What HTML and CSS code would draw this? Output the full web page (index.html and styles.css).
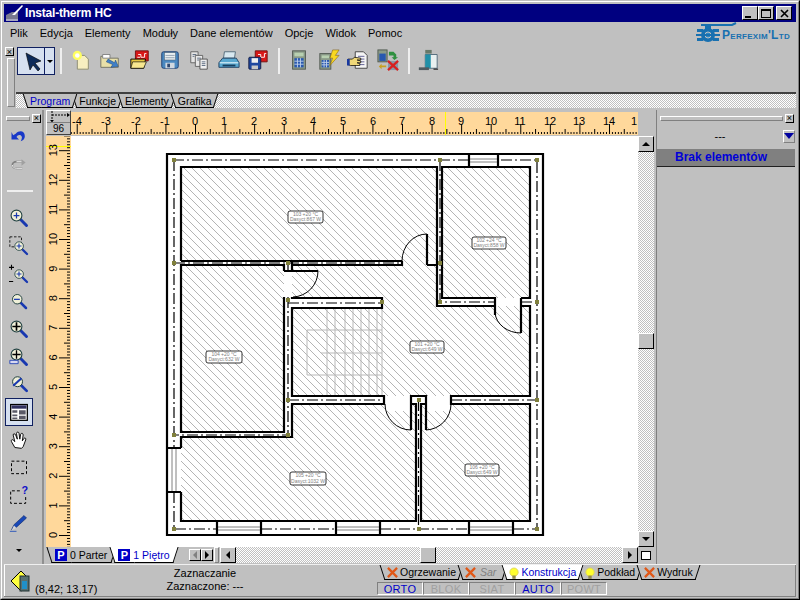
FILE: index.html
```html
<!DOCTYPE html>
<html lang="pl">
<head>
    <meta charset="UTF-8">
    <title>Instal-therm HC</title>
    <link rel="stylesheet" href="styles.css">
</head>
<body>
<svg class="defs" width="0" height="0">
    <defs>
        <pattern id="hatch" patternUnits="userSpaceOnUse" width="8" height="8">
            <path d="M-1,-1L9,9M-1,7L1,9M7,-1L9,1" stroke="#b4b4b4" stroke-width="1" fill="none"/>
        </pattern>
        <pattern id="tickx" patternUnits="userSpaceOnUse" width="29.57" height="23" x="195">
            <path d="M.5,12V22M3.5,20V22M6.4,20V22M9.4,20V22M12.3,20V22M15.3,17V22M18.2,20V22M21.2,20V22M24.1,20V22M27.1,20V22" stroke="#000" stroke-width="1" fill="none"/>
        </pattern>
        <pattern id="ticky" patternUnits="userSpaceOnUse" width="25" height="29.6" y="535">
            <path d="M13,.5H24M21,3.5H24M21,6.4H24M21,9.4H24M21,12.3H24M18,15.3H24M21,18.2H24M21,21.2H24M21,24.1H24M21,27.1H24" stroke="#000" stroke-width="1" fill="none"/>
        </pattern>

        <symbol id="i-new" viewBox="0 0 24 24"><path d="M8 7h8l4 4v11H8z" fill="#f7efc0" stroke="#8a8a70"/><circle cx="8" cy="7" r="5" fill="#ffff60"/><circle cx="8" cy="7" r="2.500" fill="#fff"/></symbol>
        <symbol id="i-open" viewBox="0 0 24 24"><path d="M2 8h7l2 2h10v10H2z" fill="#e8e0a8" stroke="#707060"/><path d="M4 6h8v4H4z" fill="#fff" stroke="#808080"/><path d="M10 11l7 4 1-3 3 7-8 1 2-3-7-3z" fill="#4080c8" stroke="#204880" stroke-width=".6"/></symbol>
        <symbol id="i-redopen" viewBox="0 0 24 24"><path d="M7 2h14v11H7z" fill="#d81818" stroke="#701010"/><path d="M10 6h3v3h4V5h2M9 9h3" stroke="#fff" fill="none"/><path d="M2 11h16l-2 10H2z" fill="#e8c840" stroke="#000"/><path d="M4 14h15l-3 7H2z" fill="#f8e890" stroke="#000" stroke-width=".7"/></symbol>
        <symbol id="i-save" viewBox="0 0 24 24"><rect x="3" y="3" width="18" height="18" rx="2" fill="#4a88c0" stroke="#1c3c70"/><rect x="6" y="4" width="12" height="8" fill="#e8eef0" stroke="#506070" stroke-width=".6"/><path d="M7 7h10M7 9.500h10" stroke="#90a0b0"/><rect x="7" y="15" width="10" height="6" fill="#d0d8e0"/><rect x="9" y="16" width="3" height="4" fill="#304870"/></symbol>
        <symbol id="i-copy" viewBox="0 0 24 24"><path d="M3 3h8v12H3z" fill="#e4e4e4" stroke="#606060"/><path d="M8 7h8v12H8z" fill="#e8e8e8" stroke="#606060"/><path d="M13 11h8v11h-8z" fill="#f0f0f0" stroke="#505050"/><path d="M5 6h4M5 8h2M10 10h4M10 12h2M15 14h4M15 16h4M15 18h4" stroke="#5a6a80"/></symbol>
        <symbol id="i-print" viewBox="0 0 24 24"><path d="M7 3h12l-1 7H6z" fill="#d8e8f0" stroke="#506878"/><path d="M5 10h15l3 5v5H1v-5z" fill="#58a8d0" stroke="#204060"/><path d="M2 15h20" stroke="#c8e4f0" stroke-width="1.500"/><path d="M5 18h14" stroke="#184060" stroke-width="2"/></symbol>
        <symbol id="i-savered" viewBox="0 0 24 24"><path d="M9 2h13v12H9z" fill="#d81818" stroke="#701010"/><path d="M12 6h3v3h4V5h2M11 10h3" stroke="#fff" fill="none"/><rect x="2" y="9" width="13" height="13" rx="1" fill="#2048a0" stroke="#101840"/><rect x="5" y="10" width="7" height="5" fill="#f0f0f0"/><rect x="5" y="18" width="7" height="4" fill="#c8c8c8"/></symbol>
        <symbol id="i-calc" viewBox="0 0 24 24"><rect x="5" y="2" width="14" height="20" fill="#8a9a88" stroke="#505850"/><rect x="7" y="4" width="10" height="4" fill="#b8d0b0"/><path d="M7 10h10v10H7z" fill="#2858b0"/><path d="M10.300 10v10M13.600 10v10M7 13.300h10M7 16.600h10" stroke="#c0d0e8"/></symbol>
        <symbol id="i-calcbolt" viewBox="0 0 24 24"><rect x="2" y="5" width="12" height="17" fill="#8a9a88" stroke="#505850"/><rect x="4" y="7" width="8" height="3" fill="#b8d0b0"/><path d="M4 12h8v8H4z" fill="#2858b0"/><path d="M6.600 12v8M9.300 12v8M4 14.600h8M4 17.300h8" stroke="#c0d0e8"/><path d="M16 1h7l-4 6h4L13 18l3-8h-3z" fill="#f8d820" stroke="#806010" stroke-width=".6"/></symbol>
        <symbol id="i-handdoc" viewBox="0 0 24 24"><path d="M9 3h9l4 4v14H9z" fill="#f4f4f4" stroke="#404040"/><path d="M12 8h7M12 11h7M12 14h7M12 17h7" stroke="#5a5a90"/><path d="M1 11h5l2-2 7 1v2h-4l4 1v2l-4 0 3 1v2l-4 0h-6l-3-1z" fill="#f0d878" stroke="#000" stroke-width=".8"/><rect x="0" y="11" width="3" height="7" fill="#1838a0"/></symbol>
        <symbol id="i-calcx" viewBox="0 0 24 24"><rect x="1" y="1" width="10" height="13" fill="#8a9a88" stroke="#505850"/><path d="M2.500 5h7v8h-7z" fill="#2858b0"/><path d="M13 3h5l3 3v3h2l-4 3-3-3h2V7h-5z" fill="#309040"/><path d="M2 19l3-3v2h5v2H5v2z" fill="#c8a020"/><rect x="12" y="13" width="11" height="10" fill="#8898a8"/><path d="M12 13l11 10M23 13L12 23" stroke="#d82020" stroke-width="2.500"/></symbol>
        <symbol id="i-door" viewBox="0 0 24 24"><path d="M9 6h13v15H9z" fill="#e8f0f0" stroke="#506878"/><path d="M9 6h6v15H9z" fill="#2090a8"/><rect x="9" y="1" width="7" height="4" fill="#687868"/><path d="M2 20h11v3H2z" fill="#505a60"/><path d="M18 22h5" stroke="#000"/></symbol>

        <symbol id="i-undo" viewBox="0 0 24 24"><path d="M8 8c5-5 11-3 11 3 0 3-2 5-5 6 2-3 2-6 0-7-2-1-4 0-5 2l3 3H3V6l2 4z" fill="#1838c8"/></symbol>
        <symbol id="i-redo" viewBox="0 0 24 24"><path d="M16 8H9c-3 0-5 2-5 4s2 4 5 4h7" fill="none" stroke="#808080" stroke-width="2"/><path d="M16 8H9M4 12c0 2 2 4 5 4h7" stroke="#fff" fill="none"/><path d="M15 5l5 4-5 4z" fill="#a0a0a0"/></symbol>
        <symbol id="zoom" viewBox="0 0 24 24"><path d="M13 13l8 8" stroke="#1838b0" stroke-width="3.500" stroke-linecap="round"/><circle cx="9" cy="9" r="6.500" fill="#f0f0d8" stroke="#204040" stroke-width="1.300"/></symbol>
        <symbol id="i-hand" viewBox="0 0 24 24"><path d="M7 21l-4-7c-1-2 1-3 2-2l2 2-2-8c0-2 2-2 3 0l2 5-1-7c0-2 3-2 3 0l1 7 1-6c1-2 3-1 3 1l-1 7 2-3c1-1 3 0 2 2l-3 8-2 2z" fill="#fff" stroke="#000" stroke-width="1.100"/></symbol>
        <symbol id="i-pencil" viewBox="0 0 24 24"><path d="M3 20l3-6L18 3l3 3L9 17z" fill="#1848b8" stroke="#0c2460" stroke-width=".7"/><path d="M3 21l3-6 3 3z" fill="#d8d8d8"/><path d="M1 22h8" stroke="#1848b8"/></symbol>
        <symbol id="i-sheet" viewBox="0 0 24 24"><rect x="2" y="3" width="20" height="19" fill="#fff" stroke="#000" stroke-width="1.500"/><rect x="3" y="4" width="18" height="4" fill="#303060"/><path d="M4 10h6v3H4zM4 15h6v2H4zM4 18.500h6v2H4zM12 10h8v5h-8zM12 16.500h8v4h-8z" fill="#5a5a68"/></symbol>

        <symbol id="i-bulb" viewBox="0 0 12 14"><circle cx="6" cy="6" r="5" fill="#ffff30" stroke="#d8d060"/><rect x="4" y="10" width="4" height="4" fill="#908850"/></symbol>
        <symbol id="i-cross" viewBox="0 0 12 12"><path d="M1 1l10 10M11 1L1 11" stroke="#e05818" stroke-width="2.500"/></symbol>
    </defs>
</svg>

<div class="window">
<div class="frame">

    <div class="titlebar">
        <svg class="title-icon" width="19" height="18" viewBox="0 0 19 18">
            <path d="M1 11l6-3h6v7H1z" fill="#787890"/><path d="M7 11L17 1l1 1L10 11z" fill="#fff"/><path d="M1 15h12v2H1z" fill="#a8a8c0"/>
        </svg>
        <span class="title-text">Instal-therm HC</span>
        <div class="win-btns">
            <button class="win-btn"><i class="glyph-min"></i></button>
            <button class="win-btn"><i class="glyph-max"></i></button>
            <button class="win-btn win-close">
                <svg width="9" height="9" viewBox="0 0 9 9"><path d="M1 1l7 7M8 1L1 8" stroke="#000" stroke-width="1.600"/></svg>
            </button>
        </div>
    </div>

    <div class="menubar">
        <span>Plik</span><span>Edycja</span><span>Elementy</span><span>Moduły</span><span>Dane elementów</span><span>Opcje</span><span>Widok</span><span>Pomoc</span>
        <div class="logo">
            <svg class="logo-mark" width="26" height="22" viewBox="0 0 26 22">
                <path d="M5 3h31l4-2" stroke="#1870b0" stroke-width="2" fill="none"/>
                <path d="M9 2v5h6V2z" fill="#1870b0"/>
                <circle cx="12" cy="13" r="7" fill="#1870b0"/>
                <circle cx="12" cy="13" r="3" fill="#2f88c4" stroke="#c0c0c0"/>
                <path d="M1 7h6l2 3H1zM23 7h-6l-2 3h8zM1 19h6l2-3H1zM23 19h-6l-2-3h8zM0 12h24v2H0z" fill="#1870b0"/>
            </svg>
            <span class="logo-text">Perfexim'Ltd</span>
        </div>
    </div>

    <div class="toolarea">
        <div class="grip-col">
            <button class="tiny-x">×</button>
            <div class="grip-v"></div>
        </div>
        <div class="toolarea-main">
            <div class="toolbar">
                <div class="arrow-btn">
                    <svg width="22" height="22" viewBox="0 0 22 22"><path d="M4 3l15 8-6 2 5 6-2 2-5-6-3 5z" fill="#0c2a5a" stroke="#000" stroke-width=".6"/></svg>
                    <span class="arrow-drop"><i class="tri-down"></i></span>
                </div>
                <div class="sep-v"></div>
                <div class="tool"><svg><use href="#i-new"/></svg></div>
                <div class="tool"><svg><use href="#i-open"/></svg></div>
                <div class="tool"><svg><use href="#i-redopen"/></svg></div>
                <div class="tool"><svg><use href="#i-save"/></svg></div>
                <div class="tool"><svg><use href="#i-copy"/></svg></div>
                <div class="tool"><svg><use href="#i-print"/></svg></div>
                <div class="tool"><svg><use href="#i-savered"/></svg></div>
                <div class="sep-v"></div>
                <div class="tool"><svg><use href="#i-calc"/></svg></div>
                <div class="tool"><svg><use href="#i-calcbolt"/></svg></div>
                <div class="tool"><svg><use href="#i-handdoc"/></svg></div>
                <div class="tool"><svg><use href="#i-calcx"/></svg></div>
                <div class="sep-v"></div>
                <div class="tool"><svg><use href="#i-door"/></svg></div>
            </div>
            <div class="tabstrip">
                <span class="tab tab-active">Program</span>
                <span class="tab">Funkcje</span>
                <span class="tab">Elementy</span>
                <span class="tab">Grafika</span>
            </div>
        </div>
    </div>

    <div class="workspace">
        <div class="sidebar">
            <div class="side-grip"><div class="grip-h"></div><button class="tiny-x">×</button></div>
            <div class="side-tool"><svg><use href="#i-undo"/></svg></div>
            <div class="side-tool"><svg><use href="#i-redo"/></svg></div>
            <div class="side-sep"></div>
            <div class="side-tool">
                <svg viewBox="0 0 24 24"><use href="#zoom" width="24" height="24"/><path d="M5.500 9h7M9 5.500v7" stroke="#1838b0" stroke-width="1.500"/></svg>
            </div>
            <div class="side-tool">
                <svg viewBox="0 0 24 24"><path d="M1 1h14v12H1z" fill="none" stroke="#000" stroke-dasharray="3 2"/><use href="#zoom" x="5" y="5" width="19" height="19"/><path d="M9 12h6M12 9v6" stroke="#1838b0" stroke-width="1.300"/></svg>
            </div>
            <div class="side-tool">
                <svg viewBox="0 0 24 24"><path d="M0 4h6M3 1v6M0 21h5" stroke="#000" stroke-width="1.300"/><use href="#zoom" x="5" y="5" width="19" height="19"/><path d="M9 12h6M12 9v6" stroke="#1838b0" stroke-width="1.300"/></svg>
            </div>
            <div class="side-tool">
                <svg viewBox="0 0 24 24"><use href="#zoom" x="2" y="2" width="21" height="21"/><path d="M6 10h7" stroke="#1838b0" stroke-width="1.500"/></svg>
            </div>
            <div class="side-tool">
                <svg viewBox="0 0 24 24"><use href="#zoom" width="24" height="24"/><path d="M4 9h10M9 4v10" stroke="#000" stroke-width="2"/></svg>
            </div>
            <div class="side-tool">
                <svg viewBox="0 0 24 24"><use href="#zoom" width="24" height="24"/><path d="M4 9h10M9 4v10" stroke="#000" stroke-width="1.600"/><path d="M1 16h10v4H1z" fill="#d8d8f0" stroke="#1838b0"/></svg>
            </div>
            <div class="side-tool">
                <svg viewBox="0 0 24 24"><use href="#zoom" x="2" y="1" width="22" height="22"/><path d="M5 14L15 5" stroke="#1838b0" stroke-width="2.500"/></svg>
            </div>
            <div class="side-tool side-tool-on"><svg><use href="#i-sheet"/></svg></div>
            <div class="side-tool"><svg><use href="#i-hand"/></svg></div>
            <div class="side-tool">
                <svg viewBox="0 0 24 24"><rect x="3" y="5" width="18" height="15" fill="none" stroke="#000" stroke-width="1.200" stroke-dasharray="3.500 2.500"/></svg>
            </div>
            <div class="side-tool">
                <svg viewBox="0 0 24 24"><path d="M13 7H2v15h18V13" fill="none" stroke="#000" stroke-width="1.200" stroke-dasharray="3.500 2.500"/><text x="15" y="11" class="help-mark">?</text></svg>
            </div>
            <div class="side-tool"><svg><use href="#i-pencil"/></svg></div>
            <div class="side-tool"><i class="tri-down"></i></div>
        </div>

        <div class="center">
            <div class="ruler-row">
                <div class="ruler-corner">
                    <svg width="22" height="11" viewBox="0 0 22 11"><path d="M4 4h15" stroke="#000" stroke-dasharray="2 1"/><path d="M19 2l3 2-3 2z" fill="#000"/><path d="M4 0v11" stroke="#000" stroke-dasharray="2 1"/><path d="M2 9l2 2 2-2z" fill="#000"/></svg>
                    <span class="corner-num">96</span>
                </div>
                <svg class="ruler-x" width="567" height="23" viewBox="71 0 567 23">
                    <rect x="71" width="567" height="23" fill="url(#tickx)"/>
                    <rect x="445" width="1" height="23" fill="#ffff00"/>
                    <g class="ruler-num">
                        <text x="77" y="13">-4</text><text x="106" y="13">-3</text><text x="136" y="13">-2</text><text x="165" y="13">-1</text><text x="195" y="13">0</text><text x="224" y="13">1</text><text x="254" y="13">2</text><text x="284" y="13">3</text><text x="313" y="13">4</text><text x="343" y="13">5</text><text x="373" y="13">6</text><text x="402" y="13">7</text><text x="432" y="13">8</text><text x="461" y="13">9</text><text x="491" y="13">10</text><text x="520" y="13">11</text><text x="550" y="13">12</text><text x="579" y="13">13</text><text x="609" y="13">14</text><text x="634" y="13">1</text>
                    </g>
                </svg>
            </div>
            <div class="canvas-row">
                <svg class="ruler-y" width="25" height="411" viewBox="0 136 25 411">
                    <rect y="136" width="25" height="411" fill="url(#ticky)"/>
                    <rect y="146" width="25" height="1" fill="#ffff00"/>
                    <g class="ruler-num">
                        <text transform="translate(11,535) rotate(-90)">0</text>
                        <text transform="translate(11,505.400) rotate(-90)">1</text>
                        <text transform="translate(11,475.800) rotate(-90)">2</text>
                        <text transform="translate(11,446.200) rotate(-90)">3</text>
                        <text transform="translate(11,416.600) rotate(-90)">4</text>
                        <text transform="translate(11,387) rotate(-90)">5</text>
                        <text transform="translate(11,357.400) rotate(-90)">6</text>
                        <text transform="translate(11,327.800) rotate(-90)">7</text>
                        <text transform="translate(11,298.200) rotate(-90)">8</text>
                        <text transform="translate(11,268.600) rotate(-90)">9</text>
                        <text transform="translate(11,239) rotate(-90)">10</text>
                        <text transform="translate(11,209.400) rotate(-90)">11</text>
                        <text transform="translate(11,179.800) rotate(-90)">12</text>
                        <text transform="translate(11,150.200) rotate(-90)">13</text>
                    </g>
                </svg>

                <svg class="plan" width="567" height="411" viewBox="71 136 567 411">
                    <path d="M181,167H437V261H181Z M442,167H530V298H442Z M181,265H284V432H181Z M292,265H402V261H427V265H437V306H530V396H292Z M181,437H292V404H416V521H181Z M421,404H530V521H421Z" fill="url(#hatch)"/>
                    <rect x="292" y="298" width="90" height="10" fill="#fff"/>
                    <rect x="385" y="397" width="26" height="14" fill="#fff"/>
                    <rect x="427" y="397" width="24" height="14" fill="#fff"/>

                    <path class="stairs" d="M327,308V396M335,308V396M345,308V396M353,308V396M361,308V396M369,308V396M377,308V396M382,308V396M307,330H382M321,353H382M307,375H382M307,330V375"/>

                    <path class="center-line" d="M174,160V448M174,492V529H217M261,529H336M380,529H469M513,529H537V160H498M469,160H174M174,263H402M440,160V302H495M521,302H537M288,263V270M288,297V435H174M288,303H382M288,400H384M451,400H537M418.500,400V529"/>

                    <path class="walls" d="M167,154H543V535H167Z"/>
                    <path class="walls" d="M181,448V437H292V404H384V396H292V308H382V298H292V297M292,271V261M284,271V265H181V432H284V297M181,261V167H437V306H495V298H442V167H530V298H521M521,306H530V396H451V404H530V521H421V404H426V396H411V404H416V521H181V492M402,261H181M292,265H402V261M427,265H437M495,298V315M521,298V333M427,234V265M284,271H318M411,404V430M426,404V430M217,521V535M261,521V535M336,521V535M380,521V535M469,521V535M513,521V535M469,154V167M498,154V167M167,448H181M167,492H181"/>

                    <path class="door-arc" d="M402,261A25,27 0 0 1 427,234M495,313A26,22 0 0 0 521,333M318,271A26,26 0 0 1 293,297M385,404A26,26 0 0 0 411,430M426,430A26,26 0 0 0 451,404"/>

                    <path class="window-glass" d="M470,159H497M470,162H497M172,449V491M176,449V491M218,527H260M218,530H260M337,527H379M337,530H379M470,527H512M470,530H512"/>

                    <g fill="#80803c">
                        <rect x="172" y="158" width="4" height="4"/><rect x="438" y="158" width="4" height="4"/><rect x="535" y="158" width="4" height="4"/>
                        <rect x="172" y="261" width="4" height="4"/><rect x="286" y="261" width="4" height="4"/><rect x="438" y="261" width="4" height="4"/>
                        <rect x="438" y="300" width="4" height="4"/><rect x="535" y="300" width="4" height="4"/><rect x="380" y="300" width="4" height="4"/>
                        <rect x="286" y="298" width="4" height="4"/><rect x="286" y="398" width="4" height="4"/><rect x="172" y="433" width="4" height="4"/>
                        <rect x="286" y="433" width="4" height="4"/><rect x="417" y="398" width="4" height="4"/><rect x="535" y="398" width="4" height="4"/>
                        <rect x="172" y="527" width="4" height="4"/><rect x="417" y="527" width="4" height="4"/><rect x="535" y="527" width="4" height="4"/>
                    </g>

                    <g class="room-tag">
                        <rect x="288" y="211" width="35" height="12" rx="2"/><text x="305.500" y="216">103 +20 °C</text><text x="305.500" y="221">Dasyct:867 W</text>
                        <rect x="472" y="237" width="34" height="12" rx="2"/><text x="489" y="242">102 +24 °C</text><text x="489" y="247">Dasyct:858 W</text>
                        <rect x="206" y="351" width="36" height="12" rx="2"/><text x="224" y="356">104 +20 °C</text><text x="224" y="361">Dasyct:632 W</text>
                        <rect x="410" y="341" width="34" height="12" rx="2"/><text x="427" y="346">101 +20 °C</text><text x="427" y="351">Dasyct:649 W</text>
                        <rect x="290" y="472" width="36" height="13" rx="2"/><text x="308" y="477">105 +20 °C</text><text x="308" y="483">Dasyct:1032 W</text>
                        <rect x="465" y="464" width="34" height="12" rx="2"/><text x="482" y="469">106 +20 °C</text><text x="482" y="474">Dasyct:649 W</text>
                    </g>
                </svg>

                <div class="vscroll">
                    <button class="sb-btn"><i class="tri-up"></i></button>
                    <div class="vtrack"><div class="thumb"></div></div>
                    <button class="sb-btn"><i class="tri-down"></i></button>
                </div>
            </div>
            <div class="sheet-row">
                <div class="sheet-tabs">
                    <span class="tab"><b class="plan-p">P</b>0 Parter</span>
                    <span class="tab tab-white"><b class="plan-p">P</b>1 Piętro</span>
                </div>
                <div class="sheet-nav">
                    <button class="nav-btn nav-off"><i class="tri-left"></i></button><button class="nav-btn"><i class="tri-right"></i></button>
                </div>
                <div class="sheet-grip"></div>
                <button class="sb-btn"><i class="tri-left"></i></button>
                <div class="htrack"><div class="thumb"></div></div>
                <button class="sb-btn"><i class="tri-right"></i></button>
                <div class="scroll-corner"><span class="corner-box"></span></div>
            </div>
        </div>

        <div class="panel">
            <div class="panel-grip"><div class="grip-h"></div><button class="tiny-x">×</button></div>
            <div class="panel-select"><span class="panel-dots">---</span><button class="panel-drop"><i class="tri-blue"></i></button></div>
            <div class="panel-head">Brak elementów</div>
        </div>
    </div>

    <div class="statusbar">
        <div class="status-pos">
            <svg width="22" height="26" viewBox="0 0 22 26"><path d="M1 13L11 3l5 5v12l-5 3z" fill="#ffff40" stroke="#000"/><rect x="10" y="8" width="9" height="15" fill="#587070" stroke="#203030"/><path d="M12 13h5v8h-5z" fill="#2090c8"/></svg>
            <span class="status-coord">(8,42; 13,17)</span>
        </div>
        <div class="status-mode">
            <span>Zaznaczanie</span>
            <span>Zaznaczone: ---</span>
        </div>
        <div class="status-right">
            <div class="mode-tabs">
                <span class="tab"><svg class="ic-cross"><use href="#i-cross"/></svg>Ogrzewanie</span>
                <span class="tab tab-muted"><svg class="ic-cross"><use href="#i-cross"/></svg>Sar</span>
                <span class="tab tab-white"><svg class="ic-bulb"><use href="#i-bulb"/></svg>Konstrukcja</span>
                <span class="tab"><svg class="ic-bulb"><use href="#i-bulb"/></svg>Podkład</span>
                <span class="tab"><svg class="ic-cross"><use href="#i-cross"/></svg>Wydruk</span>
            </div>
            <div class="flags">
                <span class="flag flag-on">ORTO</span>
                <span class="flag">BLOK</span>
                <span class="flag">SIAT</span>
                <span class="flag flag-on">AUTO</span>
                <span class="flag">POWT</span>
            </div>
        </div>
    </div>

</div>
</div>
</body>
</html>
```

FILE: styles.css
```css
* {
    box-sizing: border-box;
}
body {
    margin: 0;
    background: #c0c0c0;
    font-family: "Liberation Sans", Arial, sans-serif;
    font-size: 11px;
    color: #000;
}
button {
    padding: 0;
    font: inherit;
}
.defs {
    position: absolute;
}
.window {
    width: 800px;
    height: 600px;
    border: 1px solid;
    border-color: #c0c0c0 #000 #000 #c0c0c0;
    overflow: hidden;
}
.frame {
    width: 100%;
    height: 100%;
    padding: 2px;
    border: 1px solid;
    border-color: #fff #808080 #808080 #fff;
    display: flex;
    flex-direction: column;
    background: #c0c0c0;
}

/* title */
.titlebar {
    height: 18px;
    flex: none;
    background: #000080;
    display: flex;
    align-items: center;
    color: #fff;
}
.title-icon {
    margin: 0 1px 0 1px;
}
.title-text {
    font-weight: bold;
    font-size: 12px;
    letter-spacing: -.2px;
}
.win-btns {
    margin-left: auto;
    margin-right: 4px;
    display: flex;
}
.win-btn {
    width: 16px;
    height: 14px;
    background: #c0c0c0;
    border: 1px solid;
    border-color: #fff #000 #000 #fff;
    display: flex;
    align-items: center;
    justify-content: center;
    position: relative;
}
.win-close {
    margin-left: 2px;
}
.glyph-min {
    width: 6px;
    height: 2px;
    background: #000;
    margin: 7px 4px 0 0;
}
.glyph-max {
    width: 10px;
    height: 9px;
    border: 1px solid #000;
    border-top-width: 2px;
}

/* menu */
.menubar {
    height: 22px;
    flex: none;
    display: flex;
    align-items: center;
    gap: 12px;
    padding-left: 6px;
}
.logo {
    margin-left: auto;
    margin-right: 6px;
    display: flex;
    align-items: center;
    gap: 0;
}
.logo-mark {
    overflow: visible;
}
.logo-text {
    color: #1870b0;
    font-weight: bold;
    font-size: 12px;
    font-variant: small-caps;
    letter-spacing: .3px;
    margin-top: 4px;
}

/* toolbar */
.toolarea {
    height: 64px;
    flex: none;
    display: flex;
}
.grip-col {
    width: 12px;
    padding: 3px 0 1px 1px;
    display: flex;
    flex-direction: column;
}
.tiny-x {
    width: 9px;
    height: 9px;
    flex: none;
    background: #c0c0c0;
    border: 1px solid;
    border-color: #fff #000 #000 #fff;
    font-size: 9px;
    line-height: 6px;
    text-align: center;
    overflow: hidden;
}
.grip-v {
    flex: 1;
    width: 8px;
    margin: 2px 0 0 2px;
    border: 1px solid;
    border-color: #fff #808080 #808080 #fff;
}
.toolarea-main {
    flex: 1;
    display: flex;
    flex-direction: column;
}
.toolbar {
    height: 48px;
    padding: 3px 0 0 1px;
    display: flex;
    align-items: flex-start;
}
.arrow-btn {
    width: 38px;
    height: 28px;
    background: #d6e0f0;
    border: 1px solid #102060;
    display: flex;
    align-items: center;
    padding-left: 4px;
}
.arrow-drop {
    margin-left: auto;
    width: 10px;
    height: 100%;
    border-left: 1px solid #102060;
    display: flex;
    align-items: center;
    justify-content: center;
}
.sep-v {
    width: 2px;
    height: 26px;
    margin: 1px 4px 0 5px;
    background: #efefef;
}
.tool {
    width: 29.6px;
    height: 26px;
    display: flex;
    align-items: center;
    justify-content: center;
}
.tool svg {
    width: 22px;
    height: 22px;
}
.tabstrip {
    height: 16px;
    display: flex;
    padding-left: 9px;
    border-top: 2px solid #404040;
    background: repeating-conic-gradient(#fff 0 25%, #c0c0c0 0 50%) 0 0 / 2px 2px;
}
.tab {
    position: relative;
    z-index: 0;
    height: 14px;
    line-height: 13px;
    padding: 0 5px;
    margin-right: -1px;
    font-size: 10.5px;
    white-space: nowrap;
    display: flex;
    align-items: center;
}
.tab::before,
.tab::after {
    content: "";
    position: absolute;
    top: 0;
    bottom: 0;
    width: 60%;
    background: #c0c0c0;
    border-bottom: 1px solid #000;
    z-index: -1;
}
.tab::before {
    left: 0;
    border-left: 1px solid #000;
    transform: skewX(18deg);
}
.tab::after {
    right: 0;
    border-right: 1px solid #000;
    transform: skewX(-18deg);
}
.tab-active {
    color: #0000c8;
    z-index: 1;
}
.tab-white {
    color: #0000c8;
    z-index: 1;
}
.tab-white::before,
.tab-white::after {
    background: #fff;
}
.tab-muted {
    color: #808080;
    font-style: italic;
    padding-right: 9px;
}
.tab-muted .ic-cross {
    margin-right: 4px;
}

/* main */
.workspace {
    height: 454px;
    flex: none;
    display: flex;
    margin-top: 2px;
}
.sidebar {
    width: 40px;
    flex: none;
    border-right: 2px solid;
    border-right-color: #909090;
    display: flex;
    flex-direction: column;
    align-items: stretch;
    padding-right: 9px;
}
.side-grip {
    height: 13px;
    margin-right: -8px;
    display: flex;
    align-items: center;
    padding: 3px 0 0 2px;
    gap: 2px;
    flex: none;
}
.grip-h {
    flex: 1;
    height: 5px;
    border: 1px solid;
    border-color: #fff #808080 #808080 #fff;
}
.side-tool {
    height: 27.7px;
    flex: none;
    display: flex;
    align-items: center;
    justify-content: center;
}
.side-tool svg {
    width: 20px;
    height: 20px;
    overflow: visible;
}
.side-tool-on {
    background: #d6e0f0;
    border: 1px solid #102060;
    margin-left: 1px;
}
.side-sep {
    height: 2px;
    margin: 12px 0 12px 3px;
    background: #efefef;
    flex: none;
}
.help-mark {
    font-size: 13px;
    font-weight: bold;
    fill: #1010c8;
}
.center {
    width: 608px;
    flex: none;
    margin-left: 2px;
    display: flex;
    flex-direction: column;
}
.ruler-row {
    height: 26px;
    display: flex;
    align-items: flex-end;
    flex: none;
}
.ruler-corner {
    width: 25px;
    height: 25px;
    margin-bottom: 1px;
    background: #c0c0c0;
    border: 1px solid;
    border-color: #fff #404040 #404040 #fff;
    display: flex;
    flex-direction: column;
    align-items: center;
}
.corner-num {
    font-size: 10px;
    line-height: 11px;
    align-self: stretch;
    text-align: center;
    border-top: 1px solid #808080;
}
.ruler-x {
    display: block;
    background: #ffd89b;
    margin-bottom: 1px;
}
.ruler-y {
    display: block;
    background: #ffd89b;
    flex: none;
}
.ruler-num text {
    font-size: 11px;
    text-anchor: middle;
    fill: #000;
}
.canvas-row {
    height: 411px;
    flex: none;
    display: flex;
}
.plan {
    display: block;
    background: #fff;
    flex: none;
}
.walls {
    fill: none;
    stroke: #000;
    stroke-width: 2.2;
}
.center-line {
    fill: none;
    stroke: #000;
    stroke-width: 1.2;
    stroke-dasharray: 11 3 2 3;
}
.door-arc {
    fill: none;
    stroke: #000;
    stroke-width: 1;
}
.window-glass {
    fill: none;
    stroke: #606060;
    stroke-width: .8;
}
.stairs {
    fill: none;
    stroke: #b8b8b8;
    stroke-width: 1;
}
.room-tag rect {
    fill: #fff;
    stroke: #000;
    stroke-width: .8;
}
.room-tag text {
    font-size: 5px;
    fill: #808080;
    text-anchor: middle;
}

/* scrollbars */
.vscroll {
    width: 16px;
    flex: none;
    display: flex;
    flex-direction: column;
}
.sb-btn {
    width: 16px;
    height: 16px;
    flex: none;
    background: #c0c0c0;
    border: 1px solid;
    border-color: #fff #000 #000 #fff;
    display: flex;
    align-items: center;
    justify-content: center;
}
.thumb {
    width: 16px;
    height: 16px;
    background: #c0c0c0;
    border: 1px solid;
    border-color: #fff #000 #000 #fff;
}
.vtrack,
.htrack {
    flex: 1;
    background: repeating-conic-gradient(#fff 0 25%, #c0c0c0 0 50%) 0 0 / 2px 2px;
}
.vtrack {
    padding-top: 181px;
}
.htrack {
    height: 16px;
    padding-left: 184px;
}
.sheet-row {
    height: 17px;
    flex: none;
    display: flex;
    align-items: flex-start;
}
.sheet-tabs {
    width: 140px;
    flex: none;
    display: flex;
    padding-left: 3px;
}
.sheet-tabs .tab {
    height: 16px;
    padding: 0 6px 0 6px;
}
.plan-p {
    width: 12px;
    height: 12px;
    background: #0000c8;
    color: #fff;
    font-size: 11px;
    line-height: 12px;
    text-align: center;
    margin-right: 3px;
}
.sheet-nav {
    display: flex;
    margin: 2px 0 0 3px;
}
.nav-btn {
    width: 12px;
    height: 12px;
    background: #c0c0c0;
    border: 1px solid;
    border-color: #fff #000 #000 #fff;
    display: flex;
    align-items: center;
    justify-content: center;
}
.nav-off i {
    border-right-color: #808080;
}
.sheet-grip {
    width: 5px;
    height: 16px;
    margin: 0 1px 0 1px;
    border: 1px solid;
    border-color: #fff #808080 #808080 #fff;
}
.scroll-corner {
    width: 16px;
    height: 17px;
    padding: 4px 0 0 3px;
    flex: none;
}
.corner-box {
    display: block;
    width: 10px;
    height: 9px;
    border: 1px solid #000;
    background: #fff;
}
.tri-up,
.tri-down,
.tri-left,
.tri-right,
.tri-blue {
    display: block;
    width: 0;
    height: 0;
    border: 4px solid transparent;
}
.tri-up {
    border-bottom-color: #000;
    border-top-width: 0;
}
.tri-down {
    border-top-color: #000;
    border-width: 3px 3px 0;
}
.sb-btn .tri-down {
    border-width: 4px 4px 0;
}
.tri-left {
    border-right-color: #000;
    border-left-width: 0;
}
.tri-right {
    border-left-color: #000;
    border-right-width: 0;
}
.tri-blue {
    border-width: 6px 5px 0;
    border-top-color: #0000a0;
}

/* right panel */
.panel {
    flex: 1;
    margin-left: 2px;
    border-left: 1px solid #808080;
    display: flex;
    flex-direction: column;
}
.panel-grip {
    height: 13px;
    display: flex;
    align-items: center;
    gap: 2px;
    padding: 3px 2px 0 3px;
    flex: none;
}
.panel-select {
    height: 26px;
    display: flex;
    align-items: center;
    flex: none;
}
.panel-dots {
    flex: 1;
    text-align: center;
}
.panel-drop {
    width: 12px;
    height: 13px;
    margin-right: 1px;
    background: #c0c0c0;
    border: 1px solid;
    border-color: #fff #808080 #808080 #fff;
    display: flex;
    align-items: center;
    justify-content: center;
}
.panel-head {
    height: 18px;
    flex: none;
    margin-right: 1px;
    background: #808080;
    border-bottom: 1px solid #202020;
    color: #0000d8;
    font-weight: bold;
    font-size: 12px;
    line-height: 17px;
    padding-left: 18px;
}

/* status */
.statusbar {
    flex: 1;
    display: flex;
    border-top: 1px solid #f0f0f0;
    border-bottom: 1px solid #808080;
    box-shadow: inset -1px 0 #808080, inset 1px 0 #fff;
}
.status-pos {
    width: 160px;
    flex: none;
    padding: 3px 0 0 6px;
    display: flex;
    align-items: flex-start;
}
.status-coord {
    margin: 15px 0 0 3px;
    white-space: nowrap;
    line-height: 13px;
}
.status-mode {
    width: 82px;
    flex: none;
    display: flex;
    flex-direction: column;
    align-items: center;
    line-height: 13px;
    padding-top: 2px;
}
.status-mode span {
    white-space: nowrap;
}
.status-right {
    margin-left: 132px;
    flex: 1;
    display: flex;
    flex-direction: column;
}
.mode-tabs {
    display: flex;
    padding-left: 4px;
}
.mode-tabs .tab {
    height: 15px;
}
.ic-cross {
    width: 11px;
    height: 11px;
    margin-right: 2px;
    flex: none;
}
.ic-bulb {
    width: 10px;
    height: 12px;
    margin-right: 2px;
    flex: none;
}
.flags {
    display: flex;
    margin: 2px 0 0 -1px;
}
.flag {
    width: 46px;
    height: 13px;
    line-height: 12px;
    text-align: center;
    letter-spacing: .3px;
    color: #a0a0a0;
    border: 1px solid;
    border-color: #808080 #fff #fff #808080;
}
.flag-on {
    color: #0000c8;
}
```
